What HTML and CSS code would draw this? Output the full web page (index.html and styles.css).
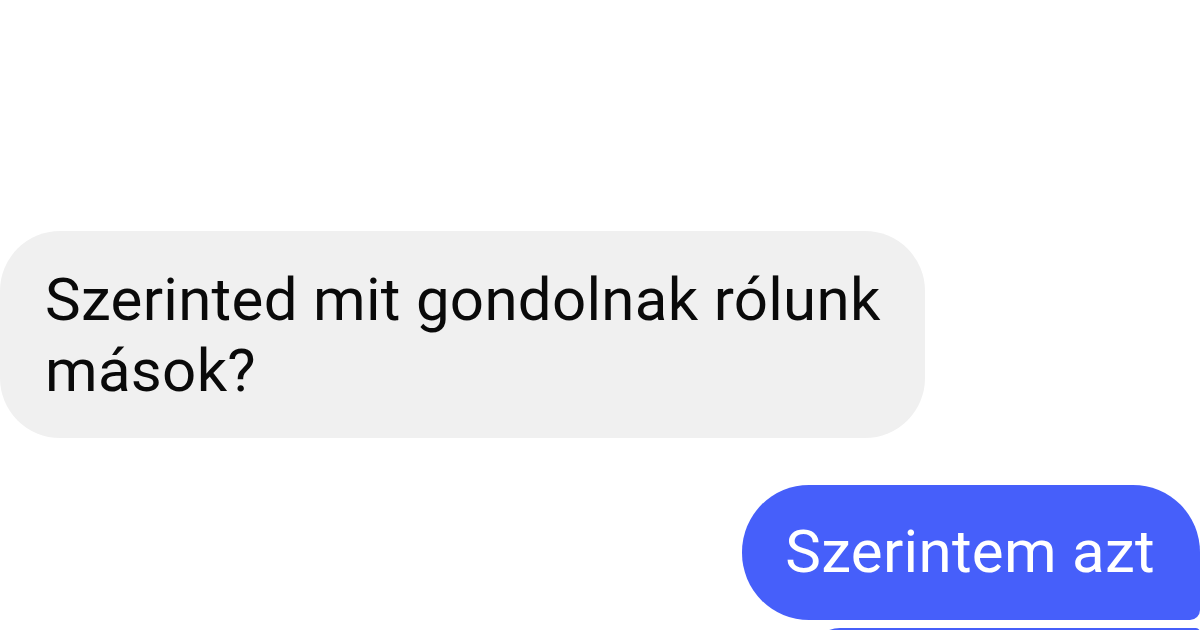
FILE: index.html
```html
<!DOCTYPE html>
<html lang="hu">
<head>
<meta charset="utf-8">
<title>Chat</title>
<link rel="stylesheet" href="styles.css">
</head>
<body>
<main class="chat">
  <div class="bubble received">Szerinted mit gondolnak rólunk mások?</div>
  <div class="bubble sent first">Szerintem azt</div>
  <div class="bubble sent next">&nbsp;</div>
</main>
</body>
</html>
```

FILE: styles.css
```css
html, body {
  margin: 0;
  padding: 0;
  background: #ffffff;
  width: 1200px;
  height: 630px;
  overflow: hidden;
}

.chat {
  display: flex;
  flex-direction: column;
  padding-top: 231px;
  font-family: Roboto, "Noto Sans", sans-serif;
  font-size: 60px;
  line-height: 71px;
  letter-spacing: 0.3px;
}

.bubble {
  box-sizing: border-box;
}

.received {
  align-self: flex-start;
  max-width: 925px;
  background: #f0f0f0;
  color: #0a0a0a;
  padding: 33px 40px 32px 45px;
  border-radius: 60px;
}

.sent {
  align-self: flex-end;
  background: #465ffa;
  color: #ffffff;
  padding: 31px 45px 33px 43px;
}

.first {
  margin-top: 47px;
  border-radius: 67px 67px 10px 67px;
}

.next {
  margin-top: 8px;
  width: 390px;
  height: 60px;
  padding: 0;
  border-radius: 67px 10px 67px 67px;
}
```
